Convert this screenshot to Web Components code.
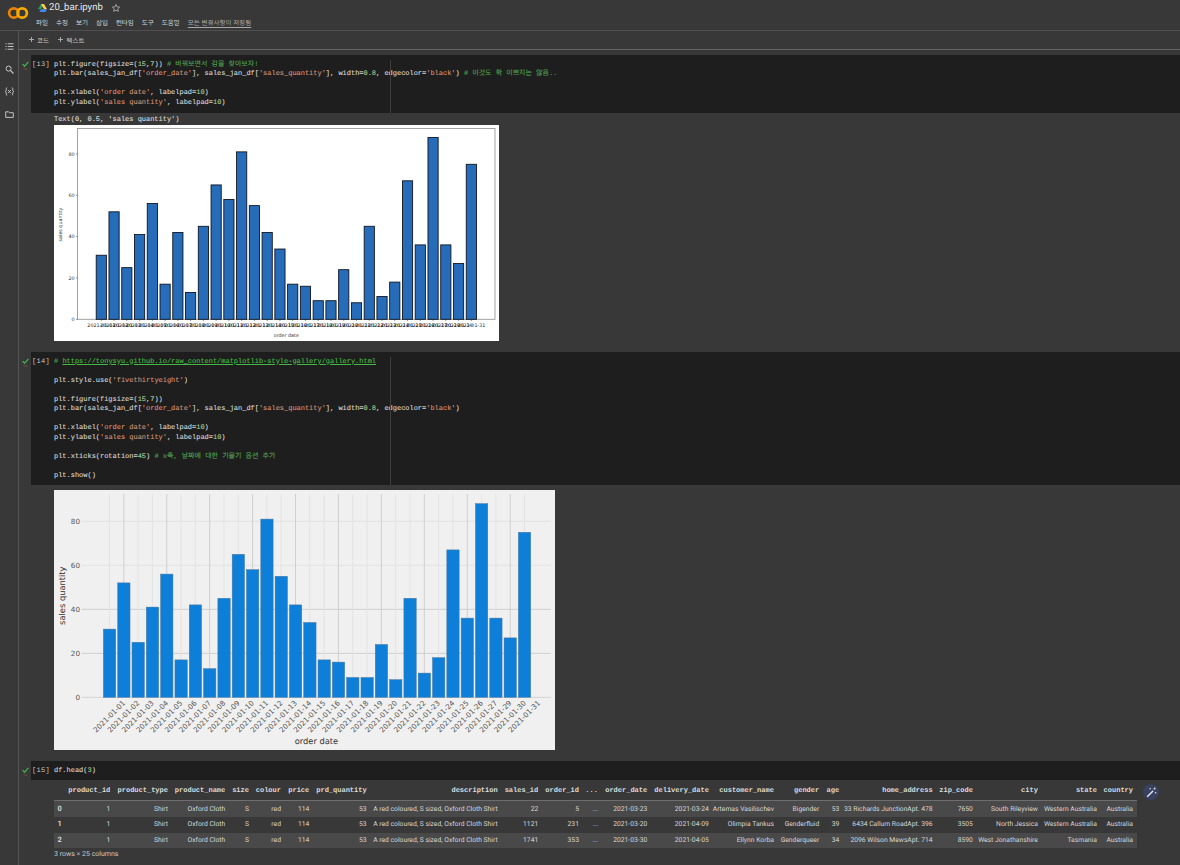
<!DOCTYPE html>
<html lang="ko">
<head>
<meta charset="utf-8">
<title>20_bar.ipynb</title>
<style>
  html, body { margin: 0; height: 865px; overflow: hidden; background: #383838; }
  body { font-family: "Noto Sans", "Noto Sans CJK KR", sans-serif; text-rendering: geometricPrecision; }
  colab-app { height: 865px; }
</style>
</head>
<body>
<colab-app>
  <colab-header slot="header" title-text="20_bar.ipynb" saved="모든 변경사항이 저장됨"></colab-header>
  <colab-sidebar slot="sidebar"></colab-sidebar>
  <colab-toolbar slot="toolbar"></colab-toolbar>

  <nb-cell n="13" ruler style="--pad-bottom: 5px">
    <code-block slot="code">plt.figure(figsize=(15,7)) # 바꿔보면서 감을 찾아보자!
plt.bar(sales_jan_df['order_date'], sales_jan_df['sales_quantity'], width=0.8, edgecolor='black') # 이것도 확 이쁘지는 않음..

plt.xlabel('order date', labelpad=10)
plt.ylabel('sales quantity', labelpad=10)</code-block>
    <nb-text>Text(0, 0.5, 'sales quantity')</nb-text>
    <bar-chart variant="plain"></bar-chart>
  </nb-cell>

  <nb-cell n="14" ruler>
    <code-block slot="code"># https://tonysyu.github.io/raw_content/matplotlib-style-gallery/gallery.html

plt.style.use('fivethirtyeight')

plt.figure(figsize=(15,7))
plt.bar(sales_jan_df['order_date'], sales_jan_df['sales_quantity'], width=0.8, edgecolor='black')

plt.xlabel('order date', labelpad=10)
plt.ylabel('sales quantity', labelpad=10)

plt.xticks(rotation=45) # x축, 날짜에 대한 기울기 옵션 추가

plt.show()</code-block>
    <bar-chart variant="538"></bar-chart>
  </nb-cell>

  <nb-cell n="15">
    <code-block slot="code">df.head(3)</code-block>
    <df-table></df-table>
  </nb-cell>
</colab-app>

<script>
const MONO = '"Liberation Mono", "Noto Sans CJK KR", monospace';

const SALES = [31, 52, 25, 41, 56, 17, 42, 13, 45, 65, 58, 81, 55, 42, 34,
  17, 16, 9, 9, 24, 8, 45, 11, 18, 67, 36, 88, 36, 27, 75];
const DAYS = [];
for (let d = 1; d <= 31; d++) {
  if (d !== 28) DAYS.push('2021-01-' + String(d).padStart(2, '0'));
}

class ColabApp extends HTMLElement {
  constructor() {
    super();
    this.attachShadow({mode: 'open'});
    this.shadowRoot.innerHTML = `
      <style>
        :host {
          display: grid;
          grid-template-columns: 19px 1fr;
          grid-template-rows: 31px 19px 1fr;
          color: #d4d4d4;
        }
        .top { grid-column: 1 / 3; }
        .side { grid-row: 2 / 4; }
        .bar { grid-column: 2; }
        main { grid-column: 2; overflow: hidden; padding-top: 5px;
               display: flex; flex-direction: column; gap: 11px; }
      </style>
      <div class="top"><slot name="header"></slot></div>
      <div class="side"><slot name="sidebar"></slot></div>
      <div class="bar"><slot name="toolbar"></slot></div>
      <main><slot></slot></main>`;
  }
}

class ColabHeader extends HTMLElement {
  constructor() {
    super();
    this.attachShadow({mode: 'open'});
    const menus = ['파일', '수정', '보기', '삽입', '런타임', '도구', '도움말'];
    this.shadowRoot.innerHTML = `
      <style>
        :host {
          display: flex;
          box-sizing: border-box;
          height: 31px;
          border-bottom: 1px solid #505050;
          padding-left: 7px;
        }
        .logo { width: 22px; height: 14px; margin-top: 6px; }
        .col { margin-left: 7px; display: flex; flex-direction: column; }
        .title { display: flex; align-items: center; height: 16px; margin-left: 2px; }
        .title span { font: 9.6px/16px Roboto, sans-serif; color: #e6e6e6; margin: 0 8px 0 2px; }
        .menu { display: flex; align-items: center; gap: 8px; height: 13px; font-size: 6.5px; color: #d6d6d6;
                font-family: "Noto Sans CJK KR", sans-serif; line-height: 13px; }
        .saved { color: #a8a8a8; text-decoration: underline; text-underline-offset: 1.5px; }
      </style>
      <svg class="logo" viewBox="0 0 22 14" fill="none" stroke-width="2.7">
        <circle cx="6.8" cy="7" r="4.7" stroke="#ec8306"/>
        <circle cx="15.2" cy="7" r="4.7" stroke="#f9ab00"/>
      </svg>
      <div class="col">
        <div class="title">
          <svg width="9" height="8" viewBox="0 0 9 8">
            <path d="M3 0h3L3 5.2H0z" fill="#1fa463"/>
            <path d="M6 0l3 5.2H6L3 0z" fill="#ffd04b"/>
            <path d="M1.5 8L3 5.2h6L7.5 8z" fill="#4688f4"/>
          </svg>
          <span>${this.getAttribute('title-text')}</span>
          <svg width="10" height="10" viewBox="0 0 24 24" fill="none" stroke="#b8b8b8" stroke-width="1.9">
            <path d="M12 3.5l2.6 5.7 6.2.7-4.6 4.2 1.3 6.1-5.5-3.1-5.5 3.1 1.3-6.1-4.6-4.2 6.2-.7z"/>
          </svg>
        </div>
        <div class="menu">
          ${menus.map((m) => `<span>${m}</span>`).join('')}
          <span class="saved">${this.getAttribute('saved')}</span>
        </div>
      </div>`;
  }
}

class ColabSidebar extends HTMLElement {
  constructor() {
    super();
    this.attachShadow({mode: 'open'});
    this.shadowRoot.innerHTML = `
      <style>
        :host {
          display: flex;
          flex-direction: column;
          align-items: center;
          box-sizing: border-box;
          width: 19px;
          height: 834px;
          border-right: 1px solid #555;
          padding-top: 11px;
          gap: 13.5px;
        }
        svg { width: 9px; height: 9px; fill: none; stroke: #c4c4c4; stroke-width: 1.1; }
      </style>
      <svg viewBox="0 0 10 10">
        <path d="M3 2h6.5M3 5h6.5M3 8h6.5M.5 2h1.2M.5 5h1.2M.5 8h1.2"/>
      </svg>
      <svg viewBox="0 0 10 10">
        <circle cx="4" cy="4" r="2.8"/><path d="M6 6l3.4 3.4" stroke-width="1.4"/>
      </svg>
      <svg viewBox="0 0 10 10" stroke-width=".9">
        <path d="M2.4.8C1.2.8 1.4 2 1.4 3.2c0 1-.3 1.6-1 1.8.7.2 1 .8 1 1.8 0 1.2-.2 2.4 1 2.4"/>
        <path d="M7.6.8c1.2 0 1 1.2 1 2.4 0 1 .3 1.6 1 1.8-.7.2-1 .8-1 1.8 0 1.2.2 2.4-1 2.4"/>
        <path d="M3.5 3.4l3 3.4M6.5 3.4l-3 3.4"/>
      </svg>
      <svg viewBox="0 0 10 10">
        <path d="M.8 2h3l1 1h4.4v5.2H.8z"/>
      </svg>`;
  }
}

class ColabToolbar extends HTMLElement {
  constructor() {
    super();
    this.attachShadow({mode: 'open'});
    this.shadowRoot.innerHTML = `
      <style>
        :host {
          display: flex;
          align-items: center;
          gap: 9.5px;
          box-sizing: border-box;
          height: 19px;
          padding: 0 0 1px 10px;
          border-bottom: 1px solid #666;
          font: 6.5px "Noto Sans CJK KR", sans-serif;
          color: #c8c8c8;
        }
        span { display: flex; align-items: center; gap: 3px; }
        svg { width: 5px; height: 5px; stroke: #b4b4b4; stroke-width: .9; }
      </style>
      <span><svg viewBox="0 0 5 5"><path d="M2.5 0v5M0 2.5h5"/></svg>코드</span>
      <span><svg viewBox="0 0 5 5"><path d="M2.5 0v5M0 2.5h5"/></svg>텍스트</span>`;
  }
}

class NbCell extends HTMLElement {
  constructor() {
    super();
    this.attachShadow({mode: 'open'});
    this.shadowRoot.innerHTML = `
      <style>
        :host { display: block; }
        .input { position: relative; display: flex; margin-left: 12px; background: #1e1e1e; }
        .gutter { position: absolute; left: -12px; top: 5px; width: 12px; height: 14px; }
        .gutter svg { display: block; margin: 1px 0 0 3px; }
        .gutter i { display: block; font: 3.6px/4px "Noto Sans", sans-serif; color: #777; text-align: center; margin-top: 1px; }
        .count { width: 23px; box-sizing: border-box; padding: 5.5px 0 0 1px;
                 font: 6.98px/9.5px ${MONO}; letter-spacing: .3px; color: #c8c8c8; }
        .code { flex: 1; padding: 5.5px 0 var(--pad-bottom, 4px); }
        .ruler { position: absolute; left: 359px; top: 5px; bottom: 0; width: 1px; background: #3d3d3d; }
        .output { padding-left: 35px; }
      </style>
      <div class="input">
        <div class="gutter">
          <svg width="7" height="6" viewBox="0 0 7 6" fill="none" stroke="#3fb950" stroke-width="1.2">
            <path d="M.6 3.2l2 2L6.4.8"/>
          </svg>
          <i>1s</i>
        </div>
        <div class="count">[${this.getAttribute('n')}]</div>
        <div class="code"><slot name="code"></slot></div>
        ${this.hasAttribute('ruler') ? '<div class="ruler"></div>' : ''}
      </div>
      <div class="output"><slot></slot></div>`;
  }
}

class CodeBlock extends HTMLElement {
  connectedCallback() {
    // the text is parsed by the time the script at the end of body runs
    if (this.shadowRoot) return;
    this.attachShadow({mode: 'open'});
    const lines = this.textContent.split('\n');
    this.shadowRoot.innerHTML = `
      <style>
        :host { display: block; font: 6.98px/9.5px ${MONO}; color: #d4d4d4; -webkit-text-stroke: .12px; }
        div { height: 9.5px; white-space: pre; }
        .s { color: #ce9178; }
        .n { color: #a5c98f; }
        .c { color: #4f9d4f; }
        .l { color: #44b944; text-decoration: underline; text-underline-offset: 1.4px; }
      </style>
      ${lines.map((l) => `<div>${this.highlight(l)}</div>`).join('')}`;
  }

  highlight(line) {
    const hash = line.indexOf('#');
    const code = hash >= 0 ? line.slice(0, hash) : line;
    let out = code
        .replace(/'[^']*'|\b\d+(\.\d+)?\b/g, (m) =>
          `<span class="${m[0] === "'" ? 's' : 'n'}">${m}</span>`);
    if (hash >= 0) {
      const comment = line.slice(hash).replace(/https?:\S+/, (u) =>
        `<span class="l">${u}</span>`);
      out += `<span class="c">${comment}</span>`;
    }
    return out;
  }
}

class NbText extends HTMLElement {
  constructor() {
    super();
    this.attachShadow({mode: 'open'});
    this.shadowRoot.innerHTML = `
      <style>
        :host { display: block; height: 12px; font: 6.98px/15px ${MONO}; color: #d8d8d8; -webkit-text-stroke: .12px; }
      </style>
      <slot></slot>`;
  }
}

class BarChart extends HTMLElement {
  connectedCallback() {
    if (this.shadowRoot) return;
    this.attachShadow({mode: 'open'});
    const is538 = this.getAttribute('variant') === '538';
    this.shadowRoot.innerHTML = `
      <style>
        :host { display: block; }
        svg { display: block; font-family: "DejaVu Sans", sans-serif; }
      </style>
      ${is538 ? this.styled() : this.plain()}`;
  }

  // first chart, origin at 54,125
  plain() {
    const base = 194.3;
    const unit = 2.067;
    const step = 12.76;
    let s = '<rect x="23.5" y="3.5" width="417.5" height="190.8" fill="none" stroke="#999" stroke-width=".9"/>';
    SALES.forEach((v, i) => {
      const x = 42.2 + i * step;
      s += `<rect x="${x.toFixed(2)}" y="${(base - v * unit).toFixed(2)}" width="10.2"
        height="${(v * unit).toFixed(2)}" fill="#276cb9" stroke="#0a0f18" stroke-width=".85"/>`;
    });
    SALES.forEach((v, i) => {
      const x = 47.3 + i * step;
      s += `<path d="M${x.toFixed(2)} ${base}v1.8" stroke="#333" stroke-width=".5"/>
        <text x="${x.toFixed(2)}" y="201.8" font-size="4.8" fill="#222" text-anchor="middle">${DAYS[i]}</text>`;
    });
    [0, 20, 40, 60, 80].forEach((t) => {
      const y = base - t * unit;
      s += `<path d="M22 ${y.toFixed(2)}h1.6" stroke="#333" stroke-width=".5"/>
        <text x="20.5" y="${(y + 1.7).toFixed(2)}" font-size="4.8" fill="#333" text-anchor="end">${t}</text>`;
    });
    s += `<text x="232.3" y="211.5" font-size="4.8" fill="#333" text-anchor="middle">order date</text>
      <text transform="translate(7.5 99.5) rotate(-90)" font-size="4.8" fill="#333" text-anchor="middle">sales quantity</text>`;
    return `<svg width="445" height="216" viewBox="0 0 445 216"><rect width="445" height="216" fill="#fff"/>${s}</svg>`;
  }

  // second chart, origin at 54,490
  styled() {
    const base = 207.3;
    const unit = 2.2;
    const step = 14.31;
    let s = '';
    [[0, '#d4d4d4'], [20, '#cfcfcf'], [40, '#cfcfcf'], [60, '#e4e4e4'], [80, '#e2e2e2']].forEach(([t, c]) => {
      const y = base - t * unit;
      s += `<path d="M27.5 ${y.toFixed(1)}H497" stroke="${c}" stroke-width="1"/>
        <text x="26" y="${(y + 2.6).toFixed(1)}" font-size="7.2" fill="#555" text-anchor="end">${t}</text>`;
    });
    SALES.forEach((v, i) => {
      const x = 55.5 + i * step;
      const c = i % 3 === 1 ? '#d0d0d0' : '#e3e3e3';
      s += `<path d="M${x.toFixed(2)} 4V${base}" stroke="${c}" stroke-width="1"/>`;
    });
    SALES.forEach((v, i) => {
      const x = 49.4 + i * step;
      s += `<rect x="${x.toFixed(2)}" y="${(base - v * unit).toFixed(2)}" width="12.3"
        height="${(v * unit).toFixed(2)}" fill="#0e7fd9" stroke="#47759c" stroke-width=".5"/>`;
    });
    SALES.forEach((v, i) => {
      const x = 55.2 + i * step;
      s += `<text transform="translate(${x.toFixed(2)} 226.5) rotate(-45)" font-size="7.2" fill="#555"
        text-anchor="middle" dominant-baseline="central">${DAYS[i]}</text>`;
    });
    s += `<text x="262.5" y="254" font-size="8.3" fill="#333" text-anchor="middle">order date</text>
      <text transform="translate(10.5 105.7) rotate(-90)" font-size="8.3" fill="#333" text-anchor="middle">sales quantity</text>`;
    return `<svg width="501" height="260" viewBox="0 0 501 260" style="margin-top:5px"><rect width="501" height="260" fill="#f0f0f0"/>${s}</svg>`;
  }
}

class DfTable extends HTMLElement {
  constructor() {
    super();
    this.attachShadow({mode: 'open'});
    const heads = ['', 'product_id', 'product_type', 'product_name', 'size', 'colour', 'price',
      'prd_quantity', 'description', 'sales_id', 'order_id', '...', 'order_date', 'delivery_date',
      'customer_name', 'gender', 'age', 'home_address', 'zip_code', 'city', 'state', 'country'];
    const widths = [10.8, 49, 57.7, 57.3, 23.7, 32, 28.3, 57.4, 131, 40.6, 40.7, 19, 49.3, 61.7,
      65, 45.3, 20, 93.4, 40.3, 65, 59, 36];
    const desc = 'A red coloured, S sized, Oxford Cloth Shirt';
    const prefix = ['1', 'Shirt', 'Oxford Cloth', 'S', 'red', '114', '53', desc];
    const rows = [
      ['0', ...prefix, '22', '5', '...', '2021-03-23', '2021-03-24', 'Artemas Vasilischev', 'Bigender', '53',
        '33 Richards JunctionApt. 478', '7650', 'South Rileyview', 'Western Australia', 'Australia'],
      ['1', ...prefix, '1121', '231', '...', '2021-03-20', '2021-04-09', 'Olimpia Tankus', 'Genderfluid', '39',
        '6434 Callum RoadApt. 396', '3505', 'North Jessica', 'Western Australia', 'Australia'],
      ['2', ...prefix, '1741', '353', '...', '2021-03-30', '2021-04-05', 'Ellynn Korba', 'Genderqueer', '34',
        '2096 Wilson MewsApt. 714', '8590', 'West Jonathanshire', 'Tasmania', 'Australia'],
    ];
    this.shadowRoot.innerHTML = `
      <style>
        :host { display: block; position: relative; padding-top: 2px; width: 1083px; }
        table { table-layout: fixed; width: 1082.5px; border-collapse: collapse;
                font: 6.75px Roboto, sans-serif; color: #d6d6d6; }
        th, td { padding: 0 3.5px 0 0; text-align: right; white-space: nowrap; overflow: visible; }
        thead th { height: 18px; padding-top: 1px; box-sizing: border-box; font: bold 7px ${MONO}; color: #dcdcdc;
                   border-bottom: 1px solid #6e6e6e; }
        tbody tr { height: 16px; }
        tbody tr:first-child { height: 17px; }
        tbody tr:nth-child(2) > * { padding-bottom: 3px; }
        tbody tr:last-child { height: 15px; }
        tbody tr:last-child > * { padding-bottom: 2px; }
        tbody tr:nth-child(odd) { background: #494949; }
        tbody th { font: bold 7.4px Roboto, sans-serif; text-align: left; padding-left: 3.5px; }
        .foot { font: 7px/12px Roboto, sans-serif; color: #c8c8c8; }
        .wand { position: absolute; left: 1089px; top: 4px; width: 16px; height: 16px; border-radius: 50%;
                background: #38415e; display: flex; align-items: center; justify-content: center; }
      </style>
      <table>
        <colgroup>${widths.map((w) => `<col style="width:${w}px">`).join('')}</colgroup>
        <thead><tr>${heads.map((h) => `<th>${h}</th>`).join('')}</tr></thead>
        <tbody>
          ${rows.map((r) => `<tr><th>${r[0]}</th>${r.slice(1).map((c) => `<td>${c}</td>`).join('')}</tr>`).join('')}
        </tbody>
      </table>
      <div class="foot">3 rows × 25 columns</div>
      <div class="wand">
        <svg width="11" height="11" viewBox="0 0 11 11" fill="none" stroke="#dfe3f0">
          <path d="M1.2 9.8L7.2 3.8" stroke-width="1.5"/>
          <path d="M8.6 .4v2.4M7.4 1.6h2.4M9.6 5v1.6M8.8 5.8h1.6M4.2 1v1.4M3.5 1.7h1.4" stroke-width=".7"/>
        </svg>
      </div>`;
  }
}

customElements.define('colab-app', ColabApp);
customElements.define('colab-header', ColabHeader);
customElements.define('colab-sidebar', ColabSidebar);
customElements.define('colab-toolbar', ColabToolbar);
customElements.define('nb-cell', NbCell);
customElements.define('code-block', CodeBlock);
customElements.define('nb-text', NbText);
customElements.define('bar-chart', BarChart);
customElements.define('df-table', DfTable);
</script>
</body>
</html>
